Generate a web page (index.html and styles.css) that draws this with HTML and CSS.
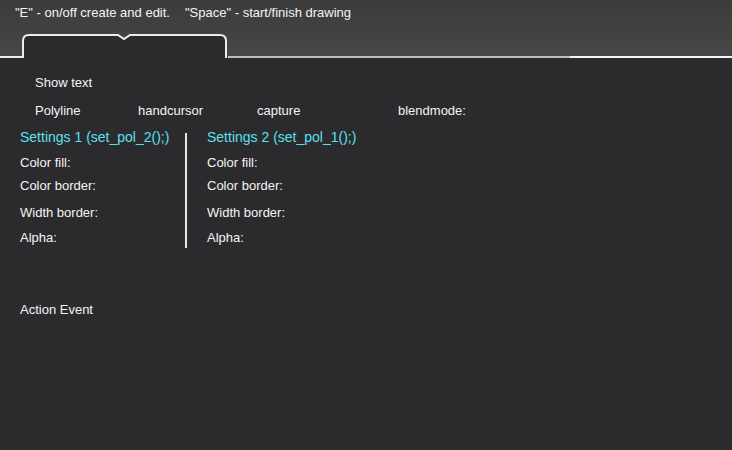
FILE: index.html
```html
<!DOCTYPE html>
<html>
<head>
<meta charset="utf-8">
<link rel="stylesheet" href="styles.css">
</head>
<body>
<header class="top">
  <div class="hint"><span>"E" - on/off create and edit.</span><span class="hint-gap"></span><span>"Space" - start/finish drawing</span></div>
  <div class="tabbar">
    <div class="line-left"></div>
    <div class="tab">
      <svg class="tab-outline" width="206" height="24" viewBox="0 0 206 24">
        <path d="M1 24 V7 Q1 1 7 1 H96 L102 5 L108 1 H198 Q204 1 204 7 V24" fill="#2b2b2d" stroke="#ececec" stroke-width="2"/>
      </svg>
    </div>
    <div class="line-mid"></div>
    <div class="line-right"></div>
  </div>
</header>
<main class="content">
  <div class="show-text">Show text</div>
  <div class="options">
    <span class="opt opt-poly">Polyline</span>
    <span class="opt opt-hand">handcursor</span>
    <span class="opt opt-cap">capture</span>
    <span class="opt">blendmode:</span>
  </div>
  <div class="settings">
    <section class="col col-first">
      <div class="col-title">Settings 1 (set_pol_2();)</div>
      <div class="row row-fill">Color fill:</div>
      <div class="row row-border">Color border:</div>
      <div class="row row-width">Width border:</div>
      <div class="row row-alpha">Alpha:</div>
    </section>
    <div class="divider"></div>
    <section class="col">
      <div class="col-title">Settings 2 (set_pol_1();)</div>
      <div class="row row-fill">Color fill:</div>
      <div class="row row-border">Color border:</div>
      <div class="row row-width">Width border:</div>
      <div class="row row-alpha">Alpha:</div>
    </section>
  </div>
  <div class="action">Action Event</div>
</main>
</body>
</html>
```
FILE: styles.css
```css
html, body {
  margin: 0;
  padding: 0;
}
body {
  width: 732px;
  height: 450px;
  overflow: hidden;
  background: #2b2b2d;
  font-family: "Liberation Sans", Arial, sans-serif;
  font-size: 13px;
  color: #f4f4f4;
}
.top {
  height: 58px;
  background: linear-gradient(#3b3b3c, #484848);
  display: flex;
  flex-direction: column;
}
.hint {
  padding: 5px 0 0 15px;
  line-height: 16px;
  height: 16px;
  display: flex;
  white-space: pre;
}
.hint-gap {
  width: 15px;
}
.tabbar {
  margin-top: auto;
  display: flex;
  align-items: flex-end;
  height: 24px;
}
.line-left {
  width: 22px;
  height: 2px;
  background: #ececec;
}
.tab {
  width: 206px;
  height: 24px;
  position: relative;
}
.tab-outline {
  position: absolute;
  left: 0;
  top: 0;
  display: block;
}
.line-mid {
  width: 342px;
  height: 2px;
  background: #bdbdbd;
}
.line-right {
  flex: 1;
  height: 2px;
  background: #f4f4f4;
}
.content {
  padding: 17px 0 0 20px;
}
.show-text {
  padding-left: 15px;
  line-height: 16px;
}
.options {
  display: flex;
  padding-left: 15px;
  margin-top: 12px;
  line-height: 16px;
}
.opt-poly { width: 103px; }
.opt-hand { width: 119px; }
.opt-cap { width: 141px; }
.settings {
  display: flex;
  margin-top: 10px;
}
.col-first {
  width: 165px;
}
.col-title {
  font-size: 14px;
  color: #5ae0ef;
  line-height: 16px;
  height: 26px;
}
.row {
  line-height: 16px;
}
.row-fill { height: 23px; }
.row-border { height: 27px; }
.row-width { height: 25px; }
.row-alpha { height: 16px; }
.divider {
  width: 2px;
  height: 115px;
  margin-top: 4px;
  margin-right: 20px;
  background: #e6e6e6;
}
.action {
  margin-top: 54px;
  line-height: 16px;
}
```
